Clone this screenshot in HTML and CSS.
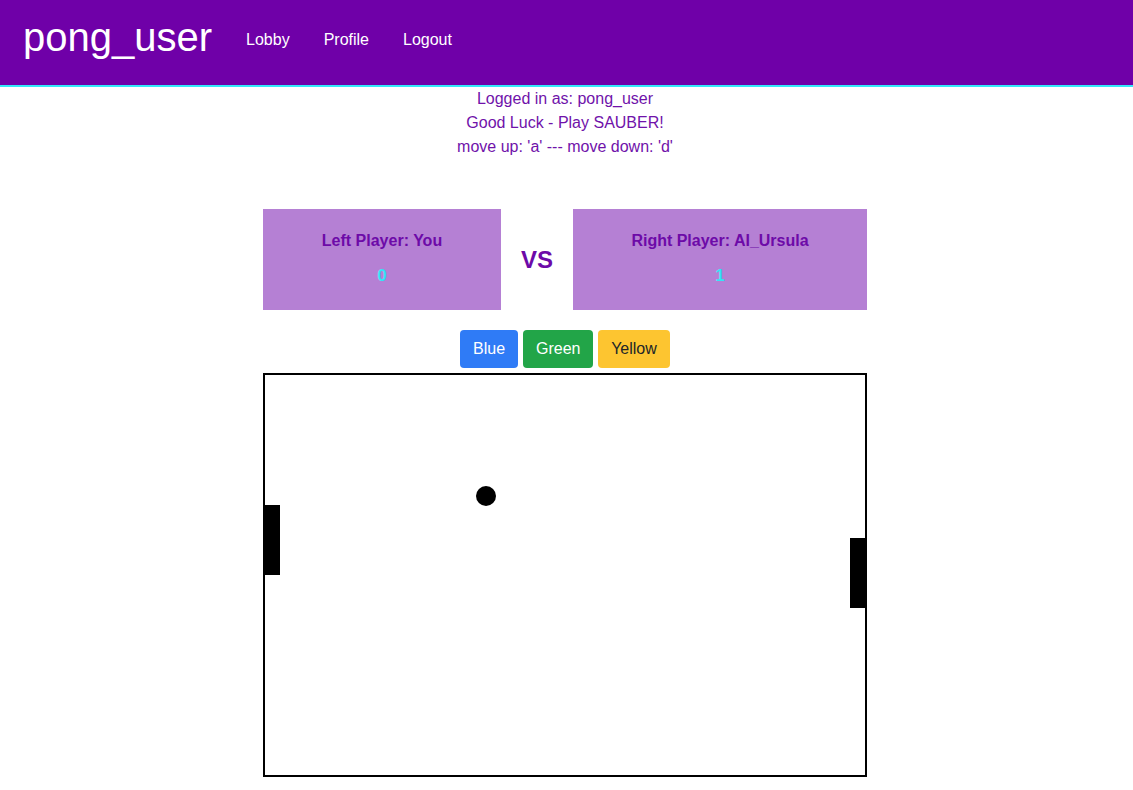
FILE: index.html
```html
<!DOCTYPE html>
<html>
<head>
<meta charset="utf-8">
<link rel="stylesheet" href="styles.css">
</head>
<body>
<header class="topbar">
  <span class="brand">pong_user</span>
  <nav class="nav">
    <a class="nav-link">Lobby</a>
    <a class="nav-link">Profile</a>
    <a class="nav-link">Logout</a>
  </nav>
</header>
<main class="main">
  <div class="info">
    <p>Logged in as: pong_user</p>
    <p>Good Luck - Play SAUBER!</p>
    <p>move up: 'a' --- move down: 'd'</p>
  </div>
  <div class="scores">
    <div class="player player-left">
      <div class="player-name">Left Player: You</div>
      <div class="player-score">0</div>
    </div>
    <div class="vs">VS</div>
    <div class="player player-right">
      <div class="player-name">Right Player: AI_Ursula</div>
      <div class="player-score">1</div>
    </div>
  </div>
  <div class="buttons">
    <button class="btn btn-blue">Blue</button>
    <button class="btn btn-green">Green</button>
    <button class="btn btn-yellow">Yellow</button>
  </div>
  <div class="board">
    <div class="paddle paddle-left"></div>
    <div class="paddle paddle-right"></div>
    <div class="ball"></div>
  </div>
</main>
</body>
</html>
```
FILE: styles.css
```css
* { box-sizing: border-box; }
html, body { margin: 0; padding: 0; }
body {
  font-family: "Liberation Sans", Arial, sans-serif;
  background: #fff;
}
.topbar {
  height: 87px;
  background: #6f00a8;
  border-bottom: 2px solid #33e8f8;
  display: flex;
  align-items: center;
  padding: 0 0 10px 23px;
}
.brand {
  color: #fff;
  font-size: 40px;
  margin-right: 34px;
}
.nav {
  display: flex;
  gap: 34px;
  padding-top: 4px;
}
.nav-link {
  color: #fff;
  font-size: 16px;
}
.main {
  width: 1130px;
  display: flex;
  flex-direction: column;
  align-items: center;
}
.info {
  text-align: center;
  color: #7012aa;
  font-size: 16px;
  line-height: 24px;
}
.info p { margin: 0; }
.scores {
  margin-top: 50px;
  display: flex;
  width: 604px;
}
.player {
  background: #b580d4;
  height: 101px;
  padding-top: 20px;
  text-align: center;
  font-weight: bold;
}
.player-left { width: 238px; }
.player-right { width: 294px; }
.player-name {
  color: #6d0aa8;
  font-size: 16px;
  line-height: 24px;
}
.player-score {
  color: #35e4f6;
  font-size: 17px;
  line-height: 24px;
  margin-top: 11px;
}
.vs {
  width: 72px;
  display: flex;
  align-items: center;
  justify-content: center;
  color: #6d0aa8;
  font-weight: bold;
  font-size: 24px;
}
.buttons {
  margin-top: 20px;
  display: flex;
  gap: 5px;
}
.btn {
  font-family: "Liberation Sans", Arial, sans-serif;
  font-size: 16px;
  height: 38px;
  padding: 0 13px;
  border: none;
  border-radius: 4px;
  line-height: 38px;
}
.btn-blue { background: #2f7bf6; color: #fff; width: 58px; }
.btn-green { background: #22a548; color: #fff; width: 70px; }
.btn-yellow { background: #fdc530; color: #212529; width: 72px; }
.board {
  position: relative;
  margin-top: 5px;
  width: 604px;
  height: 404px;
  border: 2px solid #000;
}
.paddle {
  position: absolute;
  width: 15px;
  height: 70px;
  background: #000;
}
.paddle-left { left: 0; top: 130px; }
.paddle-right { right: 0; top: 163px; }
.ball {
  position: absolute;
  width: 20px;
  height: 20px;
  border-radius: 50%;
  background: #000;
  left: 211px;
  top: 111px;
}
```
